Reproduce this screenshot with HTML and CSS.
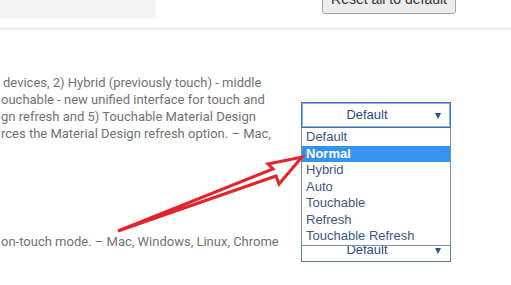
FILE: index.html
```html
<!DOCTYPE html>
<html lang="en">
<head>
    <meta charset="UTF-8">
    <title>Experiments</title>
<link rel="stylesheet" href="styles.css">
</head>
<body>
    <div class="toolbar">
        <div class="search-box"></div>
        <button class="reset-btn">Reset all to default</button>
    </div>
    <div class="experiments">
        <div class="experiment first">
            <div class="experiment-text">
                <div class="line line-one">devices, 2) Hybrid (previously touch) - middle</div>
                <div class="line">ouchable - new unified interface for touch and</div>
                <div class="line">gn refresh and 5) Touchable Material Design</div>
                <div class="line">rces the Material Design refresh option. &ndash; Mac,</div>
            </div>
            <div class="experiment-actions">
                <div class="select focused">Default<span class="caret"></span></div>
                <ul class="select-list">
                    <li>Default</li>
                    <li class="selected">Normal</li>
                    <li>Hybrid</li>
                    <li>Auto</li>
                    <li>Touchable</li>
                    <li>Refresh</li>
                    <li>Touchable Refresh</li>
                </ul>
            </div>
        </div>
        <div class="experiment second">
            <div class="experiment-text">
                <div class="line">on-touch mode. &ndash; Mac, Windows, Linux, Chrome</div>
            </div>
            <div class="experiment-actions">
                <div class="select">Default<span class="caret"></span></div>
            </div>
        </div>
    </div>
    <svg class="annotation" width="511" height="285" viewBox="0 0 511 285">
        <polygon points="118,231 273,169 268,164 302,157 279,184 276,176" fill="none" stroke="#e3242b" stroke-width="3" stroke-linejoin="miter"/>
    </svg>
</body>
</html>
```

FILE: styles.css
```css
body {
    margin: 0;
    background-color: #fff;
    font-family: Roboto, "Liberation Sans", sans-serif;
    overflow: hidden;
}

.toolbar {
    display: flex;
    height: 28px;
    border-bottom: 1px solid #e6e6e6;
    box-shadow: 0 1px 2px rgba(0, 0, 0, 0.06);
}

.search-box {
    width: 155px;
    height: 17px;
    background-color: #f3f3f3;
    box-shadow: 0 1px 2px rgba(0, 0, 0, 0.08);
}

.reset-btn {
    margin: -16px 0 0 167px;
    width: 134px;
    height: 30px;
    padding: 0;
    background-color: #ececec;
    border: 1px solid #a6a6a6;
    border-radius: 3px;
    color: #333;
    font-family: "Liberation Sans", Arial, sans-serif;
    font-size: 14px;
}

.experiments {
    padding-top: 45px;
}

.experiment {
    display: flex;
}

.experiment.second {
    margin-top: 91px;
}

.experiment-text {
    width: 301px;
    color: #727272;
    font-size: 13px;
    line-height: 17px;
    white-space: nowrap;
    overflow: hidden;
}

.line {
    padding-left: 1px;
}

.line-one {
    padding-left: 3px;
}

.experiment-actions {
    position: relative;
    width: 150px;
}

.first .experiment-actions {
    margin-top: 28px;
}

.second .experiment-actions {
    margin-top: 4px;
}

.select {
    position: relative;
    box-sizing: border-box;
    height: 25px;
    border: 1px solid #5f7d9d;
    color: #2b4a86;
    font-family: "Liberation Sans", Arial, sans-serif;
    font-size: 13px;
    line-height: 23px;
    text-align: center;
    padding-right: 18px;
}

.select.focused {
    height: 26px;
    border: 1px solid #3a73c5;
    box-shadow: inset 0 0 0 1px #8fb2e4;
    line-height: 24px;
}

.caret {
    position: absolute;
    right: 9px;
    top: 10px;
    width: 0;
    height: 0;
    border-left: 3px solid transparent;
    border-right: 3px solid transparent;
    border-top: 6px solid #2f4f8c;
}

.select-list {
    position: absolute;
    top: 26px;
    left: 0;
    box-sizing: border-box;
    width: 150px;
    margin: 0;
    padding: 1px 0 0;
    list-style: none;
    background-color: #fff;
    border: 1px solid #7a8fa6;
    border-top: none;
    color: #3d5787;
    font-family: "Liberation Sans", Arial, sans-serif;
    font-size: 13px;
    z-index: 1;
}

.select-list li {
    height: 16.5px;
    line-height: 16.5px;
    padding-left: 4px;
}

.select-list li.selected {
    background-color: #3393ee;
    color: #fff;
    font-weight: bold;
}

.annotation {
    position: absolute;
    top: 0;
    left: 0;
    pointer-events: none;
    z-index: 2;
}
```
